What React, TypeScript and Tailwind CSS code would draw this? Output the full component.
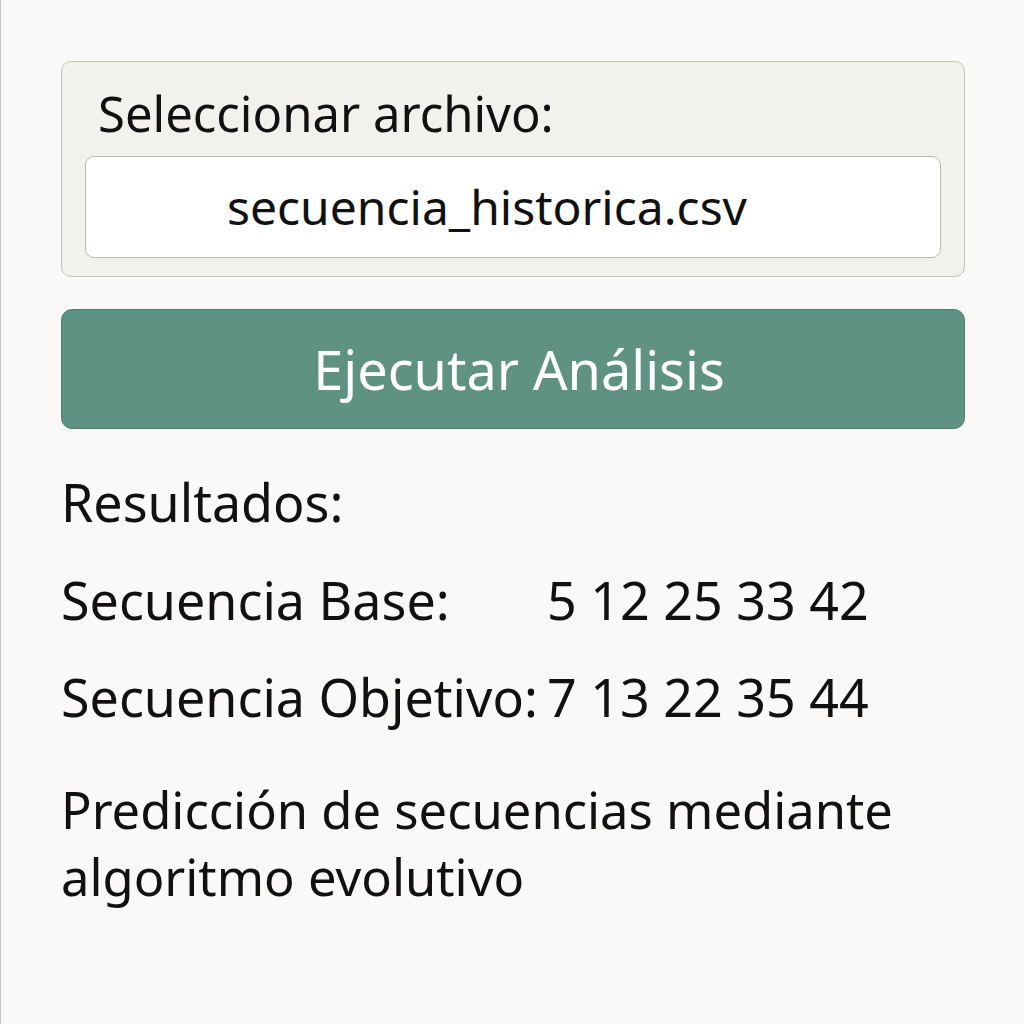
export default function App() {
  return (
    <div
      className="min-h-screen w-full border-l border-[#c9c8c4] bg-[#faf9f7] text-[#111111]"
      style={{ fontFamily: '"Noto Sans", "Open Sans", sans-serif' }}
    >
      <div className="flex w-[1024px] flex-col px-[60px] pt-[61px]">
        <div className="rounded-[10px] border border-[#c3c1bb] bg-[#f2f1ee] px-[23px] pb-[18px] pt-[23px]">
          <div className="pl-[13px] text-[49px] leading-[56px]">Seleccionar archivo:</div>
          <div className="mt-[15px] flex h-[102px] items-center justify-center rounded-[9px] border border-[#b9b8b3] bg-white pr-[52px] text-[48px]">
            secuencia_historica.csv
          </div>
        </div>

        <button className="mt-[32px] flex h-[120px] items-center justify-center rounded-[11px] border border-[#4b8170] bg-[#5f9282] pl-[12px] text-[54px] text-white">
          Ejecutar Análisis
        </button>

        <div className="mt-[43px] flex flex-col text-[52px] leading-[60px]">
          <div>Resultados:</div>
          <div className="mt-[38px] flex">
            <span className="w-[486px] shrink-0">Secuencia Base:</span>
            <span>5 12 25 33 42</span>
          </div>
          <div className="mt-[37px] flex">
            <span className="w-[486px] shrink-0 whitespace-nowrap">Secuencia Objetivo:</span>
            <span>7 13 22 35 44</span>
          </div>
          <p className="mt-[49px] text-[50.7px] leading-[67px]">
            Predicción de secuencias mediante
            <br />
            algoritmo evolutivo
          </p>
        </div>
      </div>
    </div>
  );
}
